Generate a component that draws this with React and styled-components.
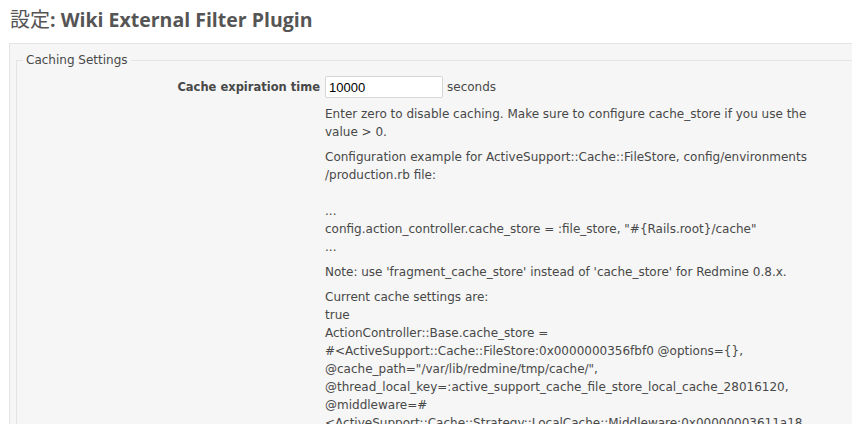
import React from "react";
import styled, { createGlobalStyle } from "styled-components";

const Global = createGlobalStyle`
  html, body { margin: 0; padding: 0; background: #fff; }
  body {
    overflow: hidden;
    font-family: "DejaVu Sans", Verdana, sans-serif;
    font-size: 12px;
    color: #484848;
  }
`;

const Page = styled.div`
  width: 852px;
  height: 424px;
  overflow: hidden;
  padding: 0 0 0 9px;
  box-sizing: border-box;
`;

const Title = styled.h2`
  margin: 0;
  padding: 7px 0 0 1px;
  height: 43px;
  box-sizing: border-box;
  font-family: "Open Sans", "DejaVu Sans", sans-serif;
  font-weight: 700;
  font-size: 19.5px;
  line-height: 24px;
  color: #555;
  white-space: nowrap;
`;

const CJK = styled.span`
  font-family: "Noto Sans CJK JP", sans-serif;
  font-weight: 400;
  font-size: 20px;
`;

const Box = styled.div`
  width: 960px;
  background: #f6f6f6;
  border: 1px solid #e4e4e4;
  padding: 9px 6px 0 6px;
  min-height: 420px;
`;

const Fieldset = styled.fieldset`
  margin: 0;
  border: 1px solid #e4e4e4;
  border-right: none;
  padding: 9px 0 40px 0;
  min-width: 0;
`;

const Legend = styled.legend`
  margin-left: 6px;
  padding: 0 3px;
  font-size: 12px;
  line-height: 14px;
  color: #484848;
`;

const Row = styled.div`
  display: grid;
  grid-template-columns: 303px 512px;
  column-gap: 5px;
  align-items: start;
`;

const Label = styled.label`
  text-align: right;
  font-weight: 700;
  font-size: 11.5px;
  line-height: 22px;
  color: #484848;
`;

const Controls = styled.div`
  display: flex;
  align-items: center;
  gap: 4px;
  height: 22px;
  margin-bottom: 7px;
`;

const Input = styled.input`
  width: 118px;
  height: 22px;
  box-sizing: border-box;
  border: 1px solid #d7d7d7;
  border-radius: 2px;
  background: #fff;
  padding: 0 3px;
  font-family: "Liberation Sans", Arial, sans-serif;
  font-size: 13px;
  color: #000;
  outline: none;
`;

const Unit = styled.span`
  line-height: 22px;
`;

const Info = styled.p`
  margin: 0 0 7px 0;
  line-height: 18px;
`;

const Overflow = styled.span`
  white-space: nowrap;
`;

export default function App() {
  return (
    <>
      <Global />
      <Page>
        <Title>
          <CJK>設定</CJK>: Wiki External Filter Plugin
        </Title>
        <Box>
          <Fieldset>
            <Legend>Caching Settings</Legend>
            <Row>
              <Label htmlFor="cache_expires">Cache expiration time</Label>
              <div>
                <Controls>
                  <Input id="cache_expires" type="text" defaultValue="10000" />
                  <Unit>seconds</Unit>
                </Controls>
                <Info>
                  Enter zero to disable caching. Make sure to configure cache_store if you use the value &gt; 0.
                </Info>
                <Info>
                  Configuration example for ActiveSupport::Cache::FileStore, config/environments<wbr />/production.rb file:
                  <br />
                  <br />
                  ...
                  <br />
                  config.action_controller.cache_store = :file_store, "#{"{"}Rails.root{"}"}/cache"
                  <br />
                  ...
                </Info>
                <Info>Note: use 'fragment_cache_store' instead of 'cache_store' for Redmine 0.8.x.</Info>
                <Info>
                  Current cache settings are:
                  <br />
                  true
                  <br />
                  ActionController::Base.cache_store =
                  <br />
                  #&lt;ActiveSupport::Cache::FileStore:0x0000000356fbf0 @options={"{}"},
                  <br />
                  @cache_path="/var/lib/redmine/tmp/cache/",
                  <br />
                  @thread_local_key=:active_support_cache_file_store_local_cache_28016120,
                  <br />
                  @middleware=#
                  <br />
                  <Overflow>&lt;ActiveSupport::Cache::Strategy::LocalCache::Middleware:0x00000003611a18</Overflow>
                </Info>
              </div>
            </Row>
          </Fieldset>
        </Box>
      </Page>
    </>
  );
}
